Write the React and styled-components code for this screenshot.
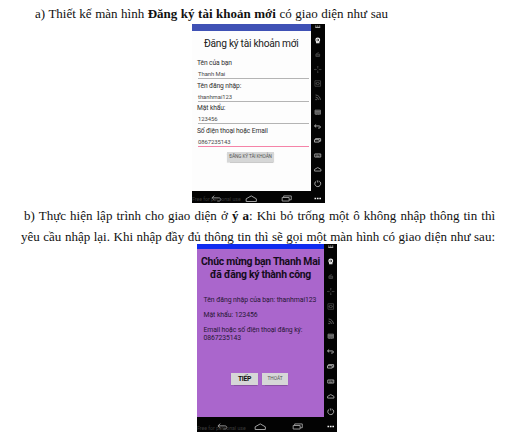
import React from "react";
import styled, { createGlobalStyle, css } from "styled-components";

const Global = createGlobalStyle`
  * { box-sizing: border-box; }
  body { margin: 0; background: #fff; }
`;

const Page = styled.main`
  width: 520px;
  height: 438px;
  overflow: hidden;
  display: flex;
  flex-direction: column;
  align-items: flex-start;
  background: #fff;
  color: #111;
  font-family: "Liberation Serif", "Times New Roman", serif;
`;

const Paragraph = styled.p`
  margin: ${(p) => p.$margin};
  width: ${(p) => p.$width}px;
  height: ${(p) => p.$height}px;
  line-height: ${(p) => p.$height}px;
  font-size: 13px;
  white-space: nowrap;
  text-align-last: justify;
`;

const Device = styled.section`
  display: grid;
  grid-template-columns: ${(p) => p.$screen}px ${(p) => p.$rail}px;
  grid-template-rows: 100%;
  height: ${(p) => p.$height}px;
  margin-left: ${(p) => p.$left}px;
  flex: none;
  background: #030303;
  font-family: Roboto, sans-serif;
  overflow: hidden;
`;

const Display = styled.div`
  display: flex;
  flex-direction: column;
  min-width: 0;
  min-height: 0;
`;

const StatusBar = styled.div`
  height: ${(p) => p.$height}px;
  flex: none;
  background: ${(p) => p.$color};
`;

const Screen = styled.div`
  flex: 1;
  min-height: 0;
  overflow: hidden;
  background: ${(p) => p.$color};
  padding: ${(p) => p.$padding};
`;

const textFit = css`
  font-size: ${(p) => p.$size}px;
  letter-spacing: ${(p) => p.$track || 0}px;
  white-space: nowrap;
`;

const FormTitle = styled.h1`
  ${textFit}
  margin: 0 0 3px;
  line-height: 25px;
  height: 23px;
  font-weight: 400;
  color: #222;
  padding-left: 7px;
`;

const Fields = styled.div`
  display: grid;
  grid-auto-rows: 22.7px;
`;

const Field = styled.label`
  display: block;
`;

const FieldLabel = styled.span`
  ${textFit}
  display: block;
  height: 12px;
  line-height: 13px;
  color: #303030;
`;

const FieldValue = styled.span`
  ${textFit}
  display: block;
  height: 10px;
  line-height: 10.5px;
  margin: 0 2px 0 1px;
  color: #4a4a4a;
  border-bottom: 1px solid ${(p) => (p.$active ? "#f583a8" : "#b4b4b4")};
`;

const Button = styled.button`
  ${textFit}
  display: block;
  width: ${(p) => p.$width}px;
  height: ${(p) => p.$height}px;
  line-height: ${(p) => p.$height}px;
  margin: ${(p) => p.$margin || 0};
  padding: 0;
  border: 0;
  background: #d6d7d7;
  box-shadow: 0 0.5px 1px rgba(0, 0, 0, 0.2);
  color: ${(p) => (p.$strong ? "#111" : "#555")};
  font-family: inherit;
  font-weight: ${(p) => (p.$strong ? 700 : 400)};
  text-align: center;
`;

const SuccessTitle = styled.h1`
  margin: 0 0 14.4px;
  display: flex;
  flex-direction: column;
  align-items: center;
  font-weight: 700;
  color: #150c1c;
`;

const TitleLine = styled.span`
  ${textFit}
  line-height: 12.6px;
`;

const Detail = styled.p`
  ${textFit}
  margin: 0 0 7px;
  padding-left: 6.5px;
  line-height: 8px;
  color: #281735;
`;

const Actions = styled.div`
  display: flex;
  gap: 4px;
  padding-left: 34px;
  margin-top: 31.2px;
`;

const NavBar = styled.nav`
  display: grid;
  grid-template-columns: repeat(3, ${(p) => p.$step}px);
  justify-content: center;
  align-items: center;
  justify-items: center;
  position: relative;
  flex: none;
  height: ${(p) => p.$height}px;
  padding-top: 3px;
  color: #a0a0a0;
`;

const Watermark = styled.span`
  position: absolute;
  left: 0;
  bottom: 0;
  font-size: 5.2px;
  line-height: 7px;
  color: #3a3a3a;
  white-space: nowrap;
`;

const Rail = styled.aside`
  display: grid;
  grid-auto-rows: ${(p) => p.$step}px;
  align-items: center;
  justify-items: center;
  margin-top: ${(p) => p.$offset}px;
`;

const Glyph = styled.svg`
  display: block;
  width: ${(p) => p.$w}px;
  height: ${(p) => p.$h}px;
  overflow: visible;
  color: ${(p) => p.$color || "inherit"};
  fill: none;
  stroke: currentColor;
  stroke-width: ${(p) => p.$stroke || 1};
`;

const BackShape = () => (
  <path d="M3.4.7.8 3.1l2.6 2.3M1 3.1h7.2c1.4 0 2.2.8 2.2 1.7S9.6 6.5 8.2 6.5H6.6" />
);
const HomeShape = () => <path d="M.9 6.5V3.8L6 .9l5.1 2.9v2.7z" />;
const RecentShape = () => (
  <path d="M.8 2.7h7.5v3.8H.8zM2.4 2.5V1h8.2v4.1H8.5" />
);

const railIcons = [
  ["#d8d8d8", <path key="g" d="M2 3.3h1.7M5.2 3.3h1.6M8.2 3.3H10M2 5.4h8" />],
  [
    "#f4f4f4",
    <g key="g">
      <circle cx="6" cy="3.2" r="2.9" strokeWidth="2" />
      <circle cx="6" cy="3.2" r=".5" fill="currentColor" />
      <path d="M3.2 7.5h5.6" strokeWidth="1.8" />
    </g>,
  ],
  ["#4a4a4a", <path key="g" d="M3 3.4h6v3.7H3zM3 5h6M3.6 2.8l3.9-2" />],
  [
    "#404040",
    <path key="g" d="M6-1v3.4M6 5.6V9M.8 4h3.5M7.7 4h3.5M5 0l1-1 1 1M5 8l1 1 1-1M1.8 3l-1 1 1 1M10.2 3l1 1-1 1" />,
  ],
  ["#444", <path key="g" d="M1.5-.4h9v8.8h-9zM4 2.2h4v3.6H4zM2 4h2M8 4h2" />],
  [
    "#686868",
    <path key="g" d="M2.5 0a8 8 0 0 1 7.7 8M2.5 3.3A4.6 4.6 0 0 1 7 8M2.8 6.7h1v1h-1z" />,
  ],
  [
    "#777",
    <g key="g">
      <path d="M1.6.2h8.8v6.5H1.6z" fill="#444" />
      <path d="M2 2.5h8M2 4.6h8M4 6.7v1M7 6.7v1" />
    </g>,
  ],
  ["#bbb", <BackShape key="g" />],
  ["#bbb", <RecentShape key="g" />],
  [
    "#aaa",
    <path key="g" d="M1.2 1.5h9.6v5H1.2zM3 3.1h1M5.5 3.1h1M8 3.1h1M3.4 5h5.2" />,
  ],
  ["#aaa", <HomeShape key="g" />],
  ["#bbb", <path key="g" d="M3.6.2a4.7 4.7 0 1 0 4.8 0M6-1v3.4" />],
  ["#f4f4f4", <path key="g" d="M.8 4h2.6M4.7 4h2.6M8.6 4h2.6" strokeWidth="2.4" />],
];

function ToolRail({ step, offset }) {
  return (
    <Rail $step={step} $offset={offset}>
      {railIcons.map(([color, shape], i) => (
        <Glyph key={i} viewBox="0 0 12 8" $w={7.5} $h={5} $color={color} $stroke={1.4}>
          {shape}
        </Glyph>
      ))}
    </Rail>
  );
}

function Navigation({ step, height }) {
  return (
    <NavBar $step={step} $height={height}>
      <Watermark>Free for personal use</Watermark>
      <Glyph viewBox="0 0 12 7" $w={11.5} $h={6.5}><BackShape /></Glyph>
      <Glyph viewBox="0 0 12 7" $w={12.5} $h={7}><HomeShape /></Glyph>
      <Glyph viewBox="0 0 12 7" $w={12} $h={6.5}><RecentShape /></Glyph>
    </NavBar>
  );
}

const fields = [
  { label: "Tên của bạn", value: "Thanh Mai" },
  { label: "Tên đăng nhập:", value: "thanhmai123" },
  { label: "Mật khẩu:", value: "123456" },
  { label: "Số điện thoại hoặc Email", value: "0867235143", active: true },
];

export default function App() {
  return (
    <Page>
      <Global />
      <Paragraph $margin="4px 0 0 35px" $width={353} $height={20}>
        a) Thiết kế màn hình <b>Đăng ký tài khoản mới</b> có giao diện như sau
      </Paragraph>

      <Device $left={192} $screen={119} $rail={14} $height={179}>
        <Display>
          <StatusBar $height={7} $color="#3f51b5" />
          <Screen $color="#fdfdfd" $padding="0 0 0 5px">
            <FormTitle $size={10.2} $track={-0.27}>Đăng ký tài khoản mới</FormTitle>
            <Fields>
              {fields.map((f) => (
                <Field key={f.label}>
                  <FieldLabel $size={6.7} $track={-0.11}>{f.label}</FieldLabel>
                  <FieldValue $size={5.9} $track={-0.05} $active={f.active}>{f.value}</FieldValue>
                </Field>
              ))}
            </Fields>
            <Button $size={4.7} $track={-0.12} $width={47} $height={10} $margin="4px 0 0 30px">
              ĐĂNG KÝ TÀI KHOẢN
            </Button>
          </Screen>
          <Navigation step={35} height={12} />
        </Display>
        <ToolRail step={14.35} offset={-5} />
      </Device>

      <Paragraph $margin="3px 0 0 24px" $width={471} $height={20}>
        b) Thực hiện lập trình cho giao diện ở <b>ý a</b>: Khi bỏ trống một ô không nhập thông tin thì
      </Paragraph>
      <Paragraph $margin="1px 0 -3px 21px" $width={474} $height={20}>
        yêu cầu nhập lại. Khi nhập đầy đủ thông tin thì sẽ gọi một màn hình có giao diện như sau:
      </Paragraph>

      <Device $left={197} $screen={127} $rail={13} $height={188}>
        <Display>
          <StatusBar $height={5} $color="#102cf0" />
          <Screen $color="#aa66cc" $padding="7px 0 0">
            <SuccessTitle>
              <TitleLine $size={10.4} $track={-0.27}>Chúc mừng bạn Thanh Mai</TitleLine>
              <TitleLine $size={10.4} $track={-0.27}>đã đăng ký thành công</TitleLine>
            </SuccessTitle>
            <Detail $size={6.9} $track={-0.07}>Tên đăng nhập của bạn: thanhmai123</Detail>
            <Detail $size={6.9} $track={-0.07}>Mật khẩu: 123456</Detail>
            <Detail $size={6.8} $track={-0.07}>
              Email hoặc số điện thoại đăng ký:
              <br />
              0867235143
            </Detail>
            <Actions>
              <Button $size={6.8} $track={-0.3} $width={27} $height={12} $strong>TIẾP</Button>
              <Button $size={4.8} $width={26} $height={12}>THOÁT</Button>
            </Actions>
          </Screen>
          <Navigation step={37.3} height={15} />
        </Display>
        <ToolRail step={15} offset={-5.5} />
      </Device>
    </Page>
  );
}
